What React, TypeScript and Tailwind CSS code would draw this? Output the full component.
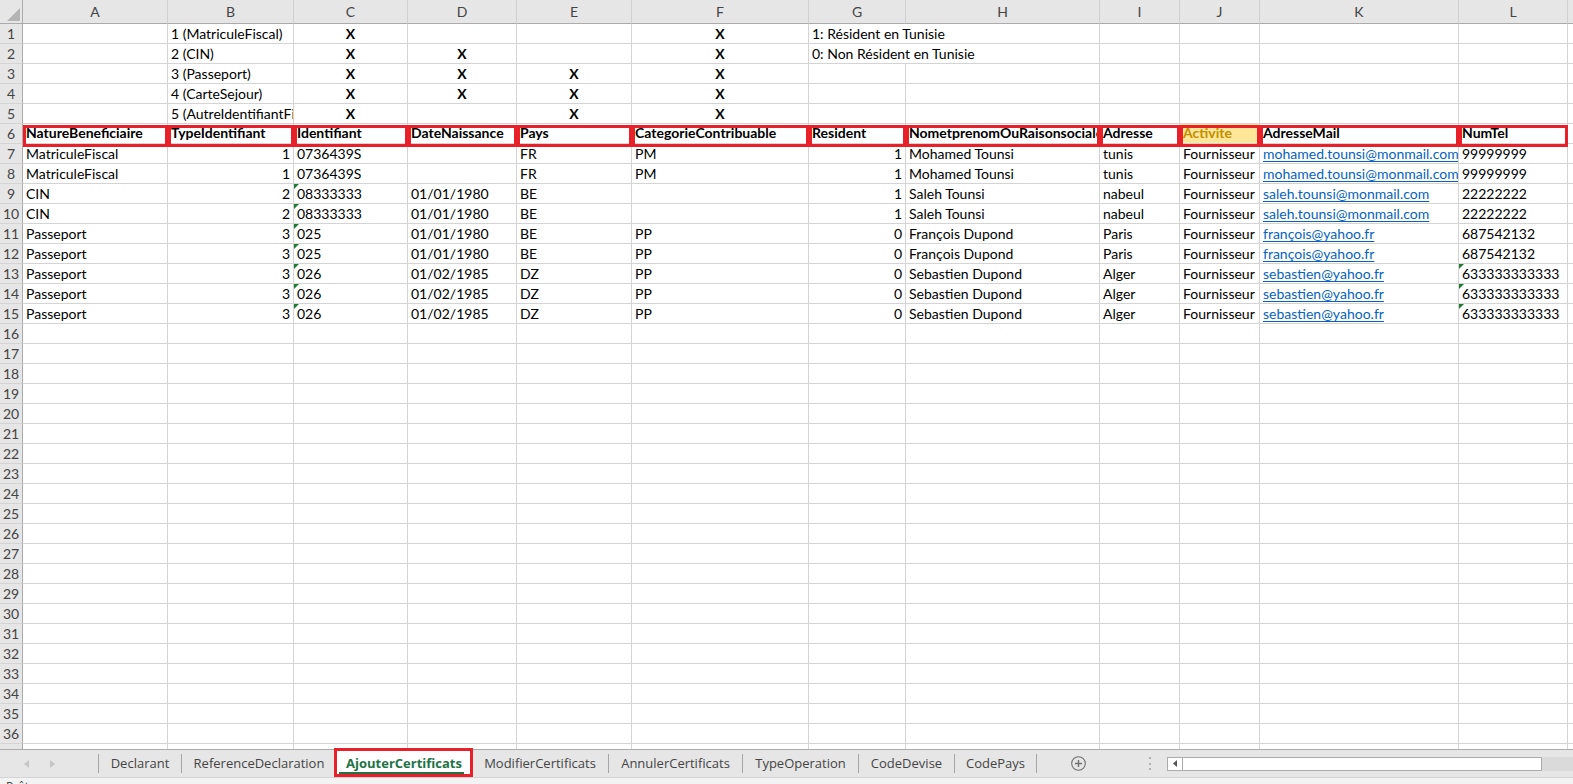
import React from 'react';

type Cell = {
  t?: string;
  a?: 'l' | 'r' | 'c';
  b?: boolean;
  link?: boolean;
  tri?: boolean;
  span?: number;
  hl?: boolean;
};

const letters = ['A', 'B', 'C', 'D', 'E', 'F', 'G', 'H', 'I', 'J', 'K', 'L', ''];

const X: Cell = { t: 'X', a: 'c', b: true };

function dataRow(
  nature: string,
  type: string,
  id: string,
  idTri: boolean,
  date: string,
  pays: string,
  cat: string,
  res: string,
  nom: string,
  adr: string,
  mail: string,
  tel: string,
  telTri: boolean
): Cell[] {
  return [
    { t: nature },
    { t: type, a: 'r' },
    { t: id, tri: idTri },
    { t: date },
    { t: pays },
    { t: cat },
    { t: res, a: 'r' },
    { t: nom },
    { t: adr },
    { t: 'Fournisseur' },
    { t: mail, link: true },
    { t: tel, tri: telTri },
    {},
  ];
}

const headerRow: Cell[] = [
  'NatureBeneficiaire',
  'TypeIdentifiant',
  'Identifiant',
  'DateNaissance',
  'Pays',
  'CategorieContribuable',
  'Resident',
  'NometprenomOuRaisonsociale',
  'Adresse',
  'Activite',
  'AdresseMail',
  'NumTel',
].map((t) => ({ t, b: true, hl: t === 'Activite' }));

const rows: Cell[][] = [
  [{}, { t: '1 (MatriculeFiscal)' }, X, {}, {}, X, { t: '1: Résident en Tunisie', span: 2 }, {}, {}, {}, {}, {}],
  [{}, { t: '2 (CIN)' }, X, X, {}, X, { t: '0: Non Résident en Tunisie', span: 2 }, {}, {}, {}, {}, {}],
  [{}, { t: '3 (Passeport)' }, X, X, X, X, {}, {}, {}, {}, {}, {}, {}],
  [{}, { t: '4 (CarteSejour)' }, X, X, X, X, {}, {}, {}, {}, {}, {}, {}],
  [{}, { t: '5 (AutreIdentifiantFiscal)' }, X, {}, X, X, {}, {}, {}, {}, {}, {}, {}],
  [...headerRow, {}],
  dataRow('MatriculeFiscal', '1', '0736439S', false, '', 'FR', 'PM', '1', 'Mohamed Tounsi', 'tunis', 'mohamed.tounsi@monmail.com', '99999999', false),
  dataRow('MatriculeFiscal', '1', '0736439S', false, '', 'FR', 'PM', '1', 'Mohamed Tounsi', 'tunis', 'mohamed.tounsi@monmail.com', '99999999', false),
  dataRow('CIN', '2', '08333333', true, '01/01/1980', 'BE', '', '1', 'Saleh Tounsi', 'nabeul', 'saleh.tounsi@monmail.com', '22222222', false),
  dataRow('CIN', '2', '08333333', true, '01/01/1980', 'BE', '', '1', 'Saleh Tounsi', 'nabeul', 'saleh.tounsi@monmail.com', '22222222', false),
  dataRow('Passeport', '3', '025', true, '01/01/1980', 'BE', 'PP', '0', 'François Dupond', 'Paris', 'françois@yahoo.fr', '687542132', false),
  dataRow('Passeport', '3', '025', true, '01/01/1980', 'BE', 'PP', '0', 'François Dupond', 'Paris', 'françois@yahoo.fr', '687542132', false),
  dataRow('Passeport', '3', '026', true, '01/02/1985', 'DZ', 'PP', '0', 'Sebastien Dupond', 'Alger', 'sebastien@yahoo.fr', '633333333333', true),
  dataRow('Passeport', '3', '026', true, '01/02/1985', 'DZ', 'PP', '0', 'Sebastien Dupond', 'Alger', 'sebastien@yahoo.fr', '633333333333', true),
  dataRow('Passeport', '3', '026', true, '01/02/1985', 'DZ', 'PP', '0', 'Sebastien Dupond', 'Alger', 'sebastien@yahoo.fr', '633333333333', true),
];

const emptyRow: Cell[] = Array.from({ length: 13 }, () => ({}));

function GridCell({ c, redBox }: { c: Cell; redBox: boolean }) {
  const align = c.a === 'r' ? 'justify-end' : c.a === 'c' ? 'justify-center' : 'justify-start';
  return (
    <div
      className={`relative flex h-[20px] items-end overflow-hidden border-r border-b border-[#d4d4d4] px-[3px] whitespace-nowrap ${align} ${
        c.hl ? 'bg-[#ffe699]' : 'bg-white'
      } ${c.span === 2 ? 'col-span-2' : ''}`}
    >
      <span
        className={`leading-[19px] ${c.b ? 'font-bold' : ''} ${
          c.hl ? 'text-[#bf8f00]' : c.link ? 'text-[#0563c1] underline underline-offset-2' : 'text-black'
        }`}
      >
        {c.t}
      </span>
      {c.tri && (
        <div className="absolute top-0 left-0 h-0 w-0 border-t-[5px] border-r-[5px] border-t-[#1e7b34] border-r-transparent" />
      )}
      {redBox && <div className="pointer-events-none absolute" />}
    </div>
  );
}

function Sheet() {
  const all = [...rows];
  while (all.length < 37) all.push(emptyRow);

  return (
    <div
      className="grid h-[749px] grid-cols-[23px_145px_126px_114px_109px_115px_177px_97px_194px_80px_80px_199px_109px_1fr] overflow-hidden bg-white text-[14px]"
      style={{ fontFamily: 'Lato, "Open Sans", sans-serif' }}
    >
      {/* corner */}
      <div className="relative h-[24px] border-r border-b border-[#ababab] bg-[#e6e6e6]">
        <svg className="absolute right-[2px] bottom-[2px]" width="13" height="13" viewBox="0 0 13 13">
          <polygon points="13,0 13,13 0,13" fill="#b4b4b4" />
        </svg>
      </div>
      {letters.map((l, i) => (
        <div
          key={i}
          className="flex h-[24px] items-center justify-center border-r border-b border-[#ababab] border-r-[#d0d0d0] bg-[#e6e6e6] text-[#444]"
        >
          {l}
        </div>
      ))}

      {all.map((r, ri) => (
        <React.Fragment key={ri}>
          <div className="flex h-[20px] items-end justify-center border-r border-b border-r-[#ababab] border-b-[#d4d4d4] bg-[#e6e6e6] leading-[19px] text-[#444]">
            {ri + 1}
          </div>
          {r.map((c, ci) =>
            ri === 5 && ci < 12 ? (
              <div
                key={ci}
                className={`relative flex h-[20px] items-end overflow-visible border-r border-b border-[#d4d4d4] whitespace-nowrap ${
                  c.hl ? 'bg-[#ffe699]' : 'bg-white'
                }`}
              >
                <div className="w-full overflow-hidden px-[3px]">
                  <span className={`leading-[19px] font-bold ${c.hl ? 'text-[#bf8f00]' : 'text-black'}`}>{c.t}</span>
                </div>
                <div className="pointer-events-none absolute top-[1px] -right-px -bottom-[4px] left-0 z-10 border-[3px] border-[#e8202a]" />
              </div>
            ) : (
              <GridCell key={ci} c={c} redBox={false} />
            )
          )}
        </React.Fragment>
      ))}
    </div>
  );
}

const tabs = [
  { name: 'Declarant', w: 'w-[82px]', sep: true },
  { name: 'ReferenceDeclaration', w: 'w-[154px]', sep: false },
  { name: 'AjouterCertificats', w: 'w-[136px]', sep: false, active: true },
  { name: 'ModifierCertificats', w: 'w-[136px]', sep: true },
  { name: 'AnnulerCertificats', w: 'w-[133px]', sep: true },
  { name: 'TypeOperation', w: 'w-[115px]', sep: true },
  { name: 'CodeDevise', w: 'w-[95px]', sep: true },
  { name: 'CodePays', w: 'w-[81px]', sep: true },
];

function Sep() {
  return <div className="h-[19px] w-px bg-[#a6a6a6]" />;
}

function TabBar() {
  return (
    <div
      className="flex h-[28px] items-center border-t border-[#ababab] bg-[#e6e6e6] text-[13px] text-[#444]"
      style={{ fontFamily: '"Open Sans", "Noto Sans", sans-serif' }}
    >
      <div className="flex h-full w-[98px] items-center gap-[20px] pl-[24px]">
        <svg width="6" height="8" viewBox="0 0 6 8">
          <polygon points="5,0 5,8 0,4" fill="#c6c6c6" />
        </svg>
        <svg width="6" height="8" viewBox="0 0 6 8">
          <polygon points="0,0 0,8 5,4" fill="#c6c6c6" />
        </svg>
      </div>
      <Sep />
      {tabs.map((t) =>
        t.active ? (
          <div key={t.name} className={`relative flex h-full items-center justify-center bg-white ${t.w}`}>
            <span className="font-bold text-[#217346]">{t.name}</span>
            <div className="absolute right-[8px] bottom-[3px] left-[3px] h-[2px] bg-[#217346]" />
            <div className="pointer-events-none absolute -top-[2px] right-[-1px] bottom-0 left-[-2px] border-[3px] border-[#e8202a]" />
          </div>
        ) : (
          <React.Fragment key={t.name}>
            <div className={`flex h-full items-center justify-center ${t.w}`}>{t.name}</div>
            {t.sep && <Sep />}
          </React.Fragment>
        )
      )}
      <div className="w-[34px]" />
      <svg width="15" height="15" viewBox="0 0 15 15">
        <circle cx="7.5" cy="7.5" r="6.8" fill="none" stroke="#6f6f6f" strokeWidth="1.1" />
        <path d="M7.5 4 V11 M4 7.5 H11" stroke="#6f6f6f" strokeWidth="1.4" />
      </svg>
      <div className="w-[63px]" />
      <div className="flex h-[13px] w-[3px] flex-col justify-between">
        <div className="h-[2px] w-[2px] bg-[#b0b0b0]" />
        <div className="h-[2px] w-[2px] bg-[#b0b0b0]" />
        <div className="h-[2px] w-[2px] bg-[#b0b0b0]" />
      </div>
      <div className="w-[15px]" />
      <div className="flex h-[14px] w-[375px] border border-[#ababab] bg-white">
        <div className="flex h-full w-[15px] items-center justify-center border-r border-[#ababab]">
          <svg width="5" height="7" viewBox="0 0 5 7">
            <polygon points="4,0 4,7 0,3.5" fill="#555" />
          </svg>
        </div>
      </div>
      <div className="h-[14px] flex-1 bg-[#dadada]" />
    </div>
  );
}

export default function App() {
  return (
    <div className="flex h-[784px] w-[1573px] flex-col overflow-hidden bg-white">
      <Sheet />
      <TabBar />
      <div
        className="h-[7px] overflow-hidden border-t border-[#d4d4d4] bg-[#f3f3f3] pt-[3px] pl-[6px] text-[12px] leading-none text-[#444]"
        style={{ fontFamily: '"Open Sans", sans-serif' }}
      >
        Prêt
      </div>
    </div>
  );
}
